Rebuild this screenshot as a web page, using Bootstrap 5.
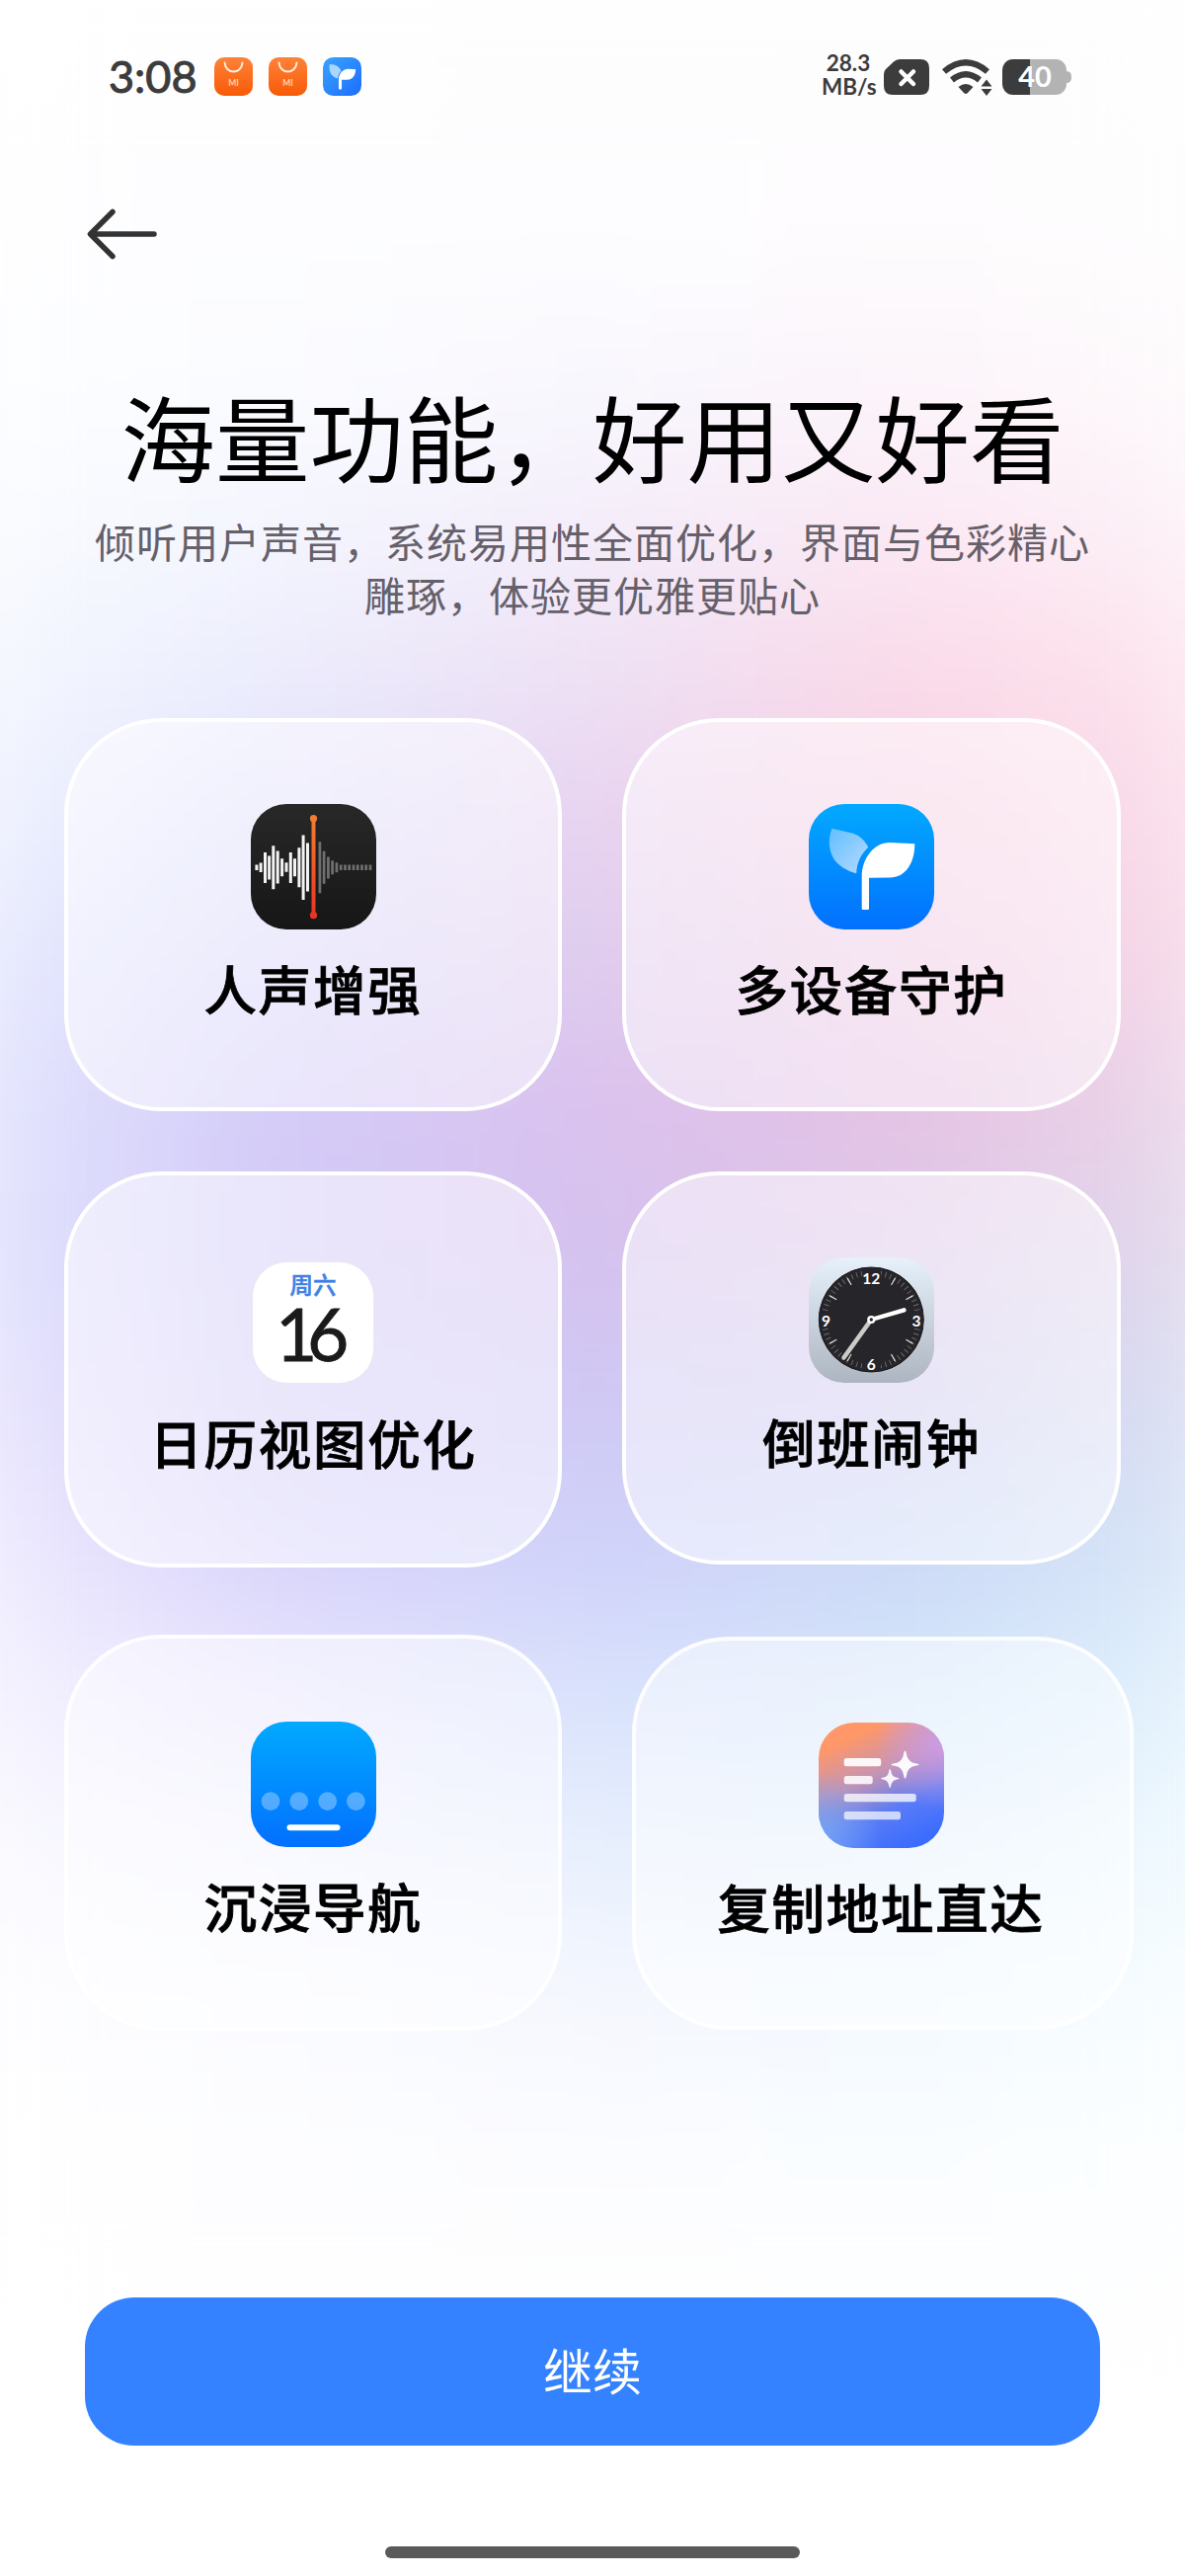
<!DOCTYPE html>
<html lang="zh-CN">

<head>
    <meta charset="UTF-8">
    <meta name="viewport" content="width=device-width, initial-scale=1.0">
    <title>海量功能，好用又好看</title>
    <link href="https://cdn.jsdelivr.net/npm/bootstrap@5.3.0/dist/css/bootstrap.min.css" rel="stylesheet">
    <style>
        body {
            font-family: "Noto Sans CJK SC", sans-serif;
            color: #000;
            background: #fff;
        }
        .screen {
            width: 1200px;
            height: 2608px;
            isolation: isolate;
        }
        /* soft colour wash behind everything */
        .wash {
            inset: 0 -60px;
            z-index: -1;
            filter: blur(62px);
        }
        .wash div { height: 150px; }
        .status-bar {
            height: 155px;
            padding: 0 115px 0 110px;
            color: #3c3c3c;
            font-family: Lato, "Noto Sans CJK SC", sans-serif;
        }
        .clock-text {
            font-size: 45px;
            line-height: 1;
            font-weight: 400;
            -webkit-text-stroke: 1px #3c3c3c;
            width: 107px;
        }
        .net-speed {
            font: 700 22.5px/24px Lato, sans-serif;
            width: 54px;
            margin: 0 9px 3px 0;
        }
        .back-row { height: 164px; padding: 54px 0 0 86px; }
        .headline {
            font-size: 95.5px;
            line-height: 130px;
            font-weight: 400;
            padding-top: 57px;
        }
        .subline {
            font-size: 41px;
            letter-spacing: 1px;
            line-height: 54px;
            color: #66606a;
            margin: 14px 0 0;
        }
        .features { padding: 99px 0 0 65px; gap: 61px; }
        .col-left { width: 504px; }
        .col-right { width: 505px; }
        .feature {
            height: 398px;
            border: 4px solid #fff;
            border-radius: 98px;
            background: rgba(255, 255, 255, .5);
            padding-top: 83px;
            margin-bottom: 61px;
        }
        .feature-name {
            font-size: 53.5px;
            letter-spacing: 1.7px;
            -webkit-text-stroke: .8px #000;
            line-height: 80px;
            font-weight: 500;
            margin-top: 19px;
            white-space: nowrap;
        }
        .feature-tall { height: 401px; }
        .feature-calendar { padding-top: 87px; margin-bottom: 68px; }
        .feature-clock { margin-bottom: 73px; }
        .feature-nav { padding-top: 84px; }
        .feature-copy { width: 508px; margin-left: 10px; }
        .features .last-card {
            border-color: rgba(255, 255, 255, .85);
        }
        .btn-continue {
            width: 1028px;
            height: 150px;
            border-radius: 50px;
            background: #3482ff;
            color: #fff;
            font-size: 50px;
            padding: 0 0 6px;
            margin: 209px 86px 0;
        }
        .home-bar {
            width: 420px;
            height: 12px;
            background: #5a5a5a;
            margin-top: 102px;
        }
        svg { display: block; flex: none; }
    </style>
</head>

<body>
    <div class="screen position-relative overflow-hidden">
        <div class="wash position-absolute" id="wash"></div>

        <div class="status-bar d-flex align-items-center justify-content-between">
            <div class="d-flex align-items-center">
                <div class="clock-text">3:08</div>
                <svg class="me-3" width="39" height="39" viewBox="0 0 39 39">
                    <defs>
                        <linearGradient id="orange" x2="0" y2="1">
                            <stop stop-color="#ff8238" />
                            <stop offset="1" stop-color="#f85a06" />
                        </linearGradient>
                    </defs>
                    <rect width="39" height="39" rx="10" fill="url(#orange)" />
                    <path d="M10.500 5.500c1 12 17 12 18 0" fill="none" stroke="#ffeedd" stroke-width="2" stroke-linecap="round" />
                    <text x="19.500" y="29" font-size="8.500" font-weight="700" fill="#ffd0a8" text-anchor="middle">MI</text>
                </svg>
                <svg class="me-3" width="39" height="39" viewBox="0 0 39 39">
                    <rect width="39" height="39" rx="10" fill="url(#orange)" />
                    <path d="M10.500 5.500c1 12 17 12 18 0" fill="none" stroke="#ffeedd" stroke-width="2" stroke-linecap="round" />
                    <text x="19.500" y="29" font-size="8.500" font-weight="700" fill="#ffd0a8" text-anchor="middle">MI</text>
                </svg>
                <svg width="39" height="39" viewBox="0 0 127 127">
                    <defs>
                        <linearGradient id="skySmall" x2="1" y2="1">
                            <stop stop-color="#38a5fb" />
                            <stop offset="1" stop-color="#1d6cff" />
                        </linearGradient>
                    </defs>
                    <rect width="127" height="127" rx="34" fill="url(#skySmall)" />
                    <path d="M22 24C40 22 54 30 60 45 53 53 50 60 49 70 28 66 18 46 22 24Z" fill="#a8d6ff" />
                    <path d="M52 103V72C54 50 67 39 84 38L108 40C107 60 98 74 80 74H62V103Q57 110 52 103Z" fill="#fff" />
                </svg>
            </div>
            <div class="d-flex align-items-center">
                <div class="net-speed text-center">28.3<br>MB/s</div>
                <svg width="46" height="36" viewBox="0 0 46 36">
                    <path d="M16 0H37Q46 0 46 9V27Q46 36 37 36H9Q0 36 0 27V15Q0 12 2 10L10 2.500Q12.500 0 16 0Z" fill="#3c3c3c" />
                    <path d="M17.500 12.500L30 25M30 12.500L17.500 25" stroke="#fff" stroke-width="4.500" stroke-linecap="round" />
                </svg>
                <svg class="ms-2 me-1" width="62" height="38" viewBox="0 0 62 38">
                    <g fill="none" stroke="#3c3c3c" stroke-width="6.200">
                        <path d="M7 13.500Q29 -5 51 13.500" />
                        <path d="M15 22Q29 10.500 43 22" />
                    </g>
                    <path d="M21.500 29Q29 23 36.500 29L31 35Q29 37 27 35Z" fill="#3c3c3c" />
                    <path d="M50 21.500L55.500 28.500H44.500ZM50 38L44.500 31H55.500Z" fill="#3c3c3c" />
                </svg>
                <svg width="70" height="36" viewBox="0 0 70 36">
                    <defs>
                        <clipPath id="cell"><rect width="65" height="36" rx="11" /></clipPath>
                    </defs>
                    <g clip-path="url(#cell)">
                        <rect width="66" height="36" fill="#b3b3b3" />
                        <rect width="28" height="36" fill="#3c3c3c" />
                    </g>
                    <path d="M65 12Q70 12 70 18T65 24Z" fill="#b3b3b3" />
                    <text x="33" y="28" font-size="29" font-weight="700" fill="#fff" text-anchor="middle">40</text>
                </svg>
            </div>
        </div>

        <div class="back-row">
            <svg width="76" height="56" viewBox="0 0 76 56">
                <path d="M70 28H7M28 5.500L5.500 28 28 50.500" fill="none" stroke="#333" stroke-width="5.500" stroke-linecap="round" stroke-linejoin="round" />
            </svg>
        </div>

        <h1 class="headline text-center mb-0">海量功能，好用又好看</h1>
        <p class="subline text-center">倾听用户声音，系统易用性全面优化，界面与色彩精心<br>雕琢，体验更优雅更贴心</p>

        <div class="features d-flex">
            <div class="col-left">
                <div class="feature d-flex flex-column align-items-center">
                    <svg width="127" height="127" viewBox="0 0 127 127">
                        <defs>
                            <linearGradient id="coal" x2="0" y2="1">
                                <stop stop-color="#282828" />
                                <stop offset="1" stop-color="#161616" />
                            </linearGradient>
                            <linearGradient id="needle" gradientUnits="userSpaceOnUse" x1="0" y1="14" x2="0" y2="113">
                                <stop stop-color="#f57c2e" />
                                <stop offset="1" stop-color="#ea3423" />
                            </linearGradient>
                        </defs>
                        <rect width="127" height="127" rx="36" fill="url(#coal)" />
                        <path d="M5.900 61.500v5.500M10.100 59.500v9.500M14.500 49v31M18.600 52.500v24M22.800 42.300v44M27.200 47.600v33M31.600 55.200v18M36 59.300v9.500M40.300 49v31M44.500 55.200v18M48.900 44.300v40M53.100 31.500v65.500M57.500 39.500v49" stroke="#f3f3f3" stroke-width="3" />
                        <path d="M69.900 38.300v52M74.100 47.800v33M78.400 53.400v22M82.600 57.200v14M86.900 59.200v10M91.200 61.500v5.500M95.500 61.500v5.500M99.700 61.500v5.500M104 61.500v5.500M108.200 61.500v5.500M112.500 61.500v5.500M116.700 61.500v5.500M121 61.500v5.500" stroke="#707070" stroke-width="2.700" />
                        <path d="M61.500 14.700h4V113h-4z" fill="url(#needle)" />
                        <circle cx="63.500" cy="14.700" r="3.600" fill="#f57c2e" />
                        <circle cx="63.500" cy="112.700" r="3.600" fill="#ea3423" />
                    </svg>
                    <div class="feature-name">人声增强</div>
                </div>
                <div class="feature feature-tall feature-calendar d-flex flex-column align-items-center">
                    <svg width="124" height="124" viewBox="0 0 124 124">
                        <rect x=".5" y=".5" width="123" height="123" rx="35" fill="#fff" stroke="#e9e7f2" />
                        <text x="62" y="32.500" font-size="23.500" font-weight="500" fill="#4080e4" stroke="#4080e4" stroke-width=".5" text-anchor="middle">周六</text>
                        <text x="24" y="101" font-family="Lato" font-size="73" fill="#1a1a1a" stroke="#1a1a1a" stroke-width=".8">1</text>
                        <text x="56" y="101" font-family="Lato" font-size="73" fill="#1a1a1a" stroke="#1a1a1a" stroke-width=".8">6</text>
                    </svg>
                    <div class="feature-name">日历视图优化</div>
                </div>
                <div class="feature feature-tall feature-nav last-card d-flex flex-column align-items-center">
                    <svg width="127" height="127" viewBox="0 0 127 127">
                        <defs>
                            <linearGradient id="sky" x2="0" y2="1">
                                <stop stop-color="#02a9ff" />
                                <stop offset="1" stop-color="#0270ff" />
                            </linearGradient>
                        </defs>
                        <rect width="127" height="127" rx="36" fill="url(#sky)" />
                        <g fill="#fff" fill-opacity=".32">
                            <circle cx="20" cy="80.700" r="9.400" />
                            <circle cx="48.800" cy="80.700" r="9.400" />
                            <circle cx="77.700" cy="80.700" r="9.400" />
                            <circle cx="106.400" cy="80.700" r="9.400" />
                        </g>
                        <rect x="36.500" y="104.300" width="54" height="6" rx="3" fill="#fff" />
                    </svg>
                    <div class="feature-name">沉浸导航</div>
                </div>
            </div>

            <div class="col-right">
                <div class="feature d-flex flex-column align-items-center">
                    <svg width="127" height="127" viewBox="0 0 127 127">
                        <defs>
                            <linearGradient id="leaf" x2="1" y2="1">
                                <stop stop-color="#62bfff" />
                                <stop offset="1" stop-color="#b5daff" />
                            </linearGradient>
                        </defs>
                        <rect width="127" height="127" rx="36" fill="url(#sky)" />
                        <path d="M23.400 24.700L44 29.500C51 31.500 57 37 60.300 43.700 52 52 49 59 48.200 70.300 39 68 29 62 25 55 20 46 19.500 35 23.400 24.700Z" fill="url(#leaf)" />
                        <path d="M53.700 106V73C54 55 66 39 82 39L107.300 40.300C107.300 60 98 74.500 82 74.500L61 74.800V106Q61 107 60 107H54.700Q53.700 107 53.700 106Z" fill="#fff" />
                    </svg>
                    <div class="feature-name">多设备守护</div>
                </div>
                <div class="feature feature-clock d-flex flex-column align-items-center">
                    <svg width="127" height="127" viewBox="0 0 127 127" font-family="Lato" font-weight="700">
                        <defs>
                            <linearGradient id="steel" x2="0" y2="1">
                                <stop stop-color="#e6f1fb" />
                                <stop offset="1" stop-color="#adb5c0" />
                            </linearGradient>
                        </defs>
                        <rect width="127" height="127" rx="36" fill="url(#steel)" />
                        <circle cx="63.300" cy="63" r="53" fill="#26262a" stroke="#17171a" />
                        <circle cx="63.300" cy="63" r="47.500" fill="none" stroke="#77777a" stroke-width="5.500" pathLength="600" stroke-dasharray="1.600 8.400" stroke-dashoffset=".8" />
                        <circle cx="63.300" cy="63" r="44.500" fill="none" stroke="#d8d8d4" stroke-width="8" pathLength="120" stroke-dasharray=".550 9.450" stroke-dashoffset=".27" />
                        <path d="M54 10.500h19v15H54zM54 101h19v14H54zM10.500 55h14v16h-14zM102 55h14v16h-14z" fill="#26262a" />
                        <g fill="#fff" font-size="15.500" text-anchor="middle">
                            <text x="63.300" y="26.500">12</text>
                            <text x="109" y="69.500">3</text>
                            <text x="63.300" y="114">6</text>
                            <text x="17.500" y="69.500">9</text>
                        </g>
                        <path d="M63.300 63L35.500 101.500" stroke="#cbcbc7" stroke-width="4.600" stroke-linecap="round" />
                        <path d="M63.300 63L96.500 53.300" stroke="#fff" stroke-width="4.400" stroke-linecap="round" />
                        <circle cx="63.300" cy="63" r="2.900" fill="#26262a" stroke="#fff" stroke-width="2.400" />
                    </svg>
                    <div class="feature-name">倒班闹钟</div>
                </div>
                <div class="feature feature-copy last-card d-flex flex-column align-items-center">
                    <svg class="me-1" width="127" height="127" viewBox="0 0 127 127">
                        <defs>
                            <linearGradient id="dusk" x1=".25" y1="0" x2=".7" y2="1">
                                <stop offset=".1" stop-color="#ff9768" />
                                <stop offset=".42" stop-color="#c594b4" />
                                <stop offset=".7" stop-color="#5a7cf6" />
                                <stop offset="1" stop-color="#3a6cff" />
                            </linearGradient>
                            <radialGradient id="lilac" cx="1" cy=".15" r=".55">
                                <stop stop-color="#cb9ce4" />
                                <stop offset="1" stop-color="#cb9ce4" stop-opacity="0" />
                            </radialGradient>
                            <radialGradient id="mist" cx="0" cy=".9" r=".5">
                                <stop stop-color="#74a4f4" />
                                <stop offset="1" stop-color="#74a4f4" stop-opacity="0" />
                            </radialGradient>
                        </defs>
                        <rect width="127" height="127" rx="36" fill="url(#dusk)" />
                        <rect width="127" height="127" rx="36" fill="url(#lilac)" />
                        <rect width="127" height="127" rx="36" fill="url(#mist)" />
                        <g fill="#fff">
                            <rect x="25.700" y="36" width="37.500" height="8.300" rx="2.500" fill-opacity=".93" />
                            <rect x="25.700" y="54" width="29" height="8.300" rx="2.500" fill-opacity=".86" />
                            <rect x="25.700" y="72" width="73" height="8.300" rx="2.500" fill-opacity=".76" />
                            <rect x="25.700" y="90" width="57.300" height="8.300" rx="2.500" fill-opacity=".7" />
                            <path d="M87.500 28.500Q88.500 28.500 88.800 31 90 40 98 41.200 101.500 41.600 101.500 42.500T98 43.800Q90 45 88.800 54 88.500 56.500 87.500 56.500T86.200 54Q85 45 77 43.800 73.500 43.400 73.500 42.500T77 41.200Q85 40 86.200 31 86.500 28.500 87.500 28.500Z" fill-opacity=".95" />
                            <path d="M72.200 47Q73 47 73.200 49 74 55 79.500 55.700 81.500 56 81.500 56.500T79.500 57.400Q74 58 73.200 64 73 66 72.200 66T71.200 64Q70.400 58 65 57.400 63 57 63 56.500T65 55.700Q70.400 55 71.200 49 71.400 47 72.200 47Z" fill-opacity=".9" />
                        </g>
                    </svg>
                    <div class="feature-name me-1">复制地址直达</div>
                </div>
            </div>
        </div>

        <button type="button" class="btn btn-continue border-0">继续</button>
        <div class="home-bar rounded-pill mx-auto"></div>
    </div>

    <script src="https://cdn.jsdelivr.net/npm/bootstrap@5.3.0/dist/js/bootstrap.bundle.min.js"></script>
    <script>
        // each row: colours from left to right, top of the screen first
        const washRows = [
            ["#ffffff", "#fefefe", "#fdfdfe", "#fefdfe", "#fefefe"],
            ["#fefeff", "#fdfdff", "#fdfdff", "#fefcfe", "#fefefe"],
            ["#fdfeff", "#fbfcff", "#f9f8fe", "#fcf5fa", "#fefcfd"],
            ["#fafcff", "#f4f6fe", "#f4eefa", "#fbe9f4", "#fdf4f9"],
            ["#f6f9ff", "#ecedfd", "#eee1f5", "#fbdae8", "#fde8f1"],
            ["#f1f5ff", "#dfe0fb", "#e8d3f0", "#f6d0e2", "#fbe0ec"],
            ["#e9edff", "#d8d6fa", "#deccee", "#efc9e2", "#f7dceb"],
            ["#e5e8ff", "#d3cbf8", "#dac0ee", "#e5c2e3", "#ecdbeb"],
            ["#e4e7ff", "#d2cbf7", "#d5c1ee", "#dcc9e8", "#e3dced"],
            ["#ebe9ff", "#d4cdf7", "#cfc8f4", "#cfcdef", "#dce2f3"],
            ["#f2efff", "#d9d4fb", "#d0d2fa", "#cbdaf7", "#dbe9f8"],
            ["#f7f4ff", "#e9e6fd", "#d9e2fc", "#d5e7fb", "#e6f4fd"],
            ["#fbfbff", "#f3f4fe", "#e8effd", "#e6f2fd", "#f2fbff"],
            ["#fefeff", "#fafbff", "#f5f7fe", "#f2f9ff", "#f9feff"],
            ["#ffffff", "#fdfdff", "#fbfcff", "#fafdff", "#fdffff"],
            ["#ffffff", "#fefeff", "#fefefe", "#fdfeff", "#fefeff"]
        ];
        const wash = document.getElementById("wash");
        washRows.forEach(row => {
            wash.innerHTML += `<div style="background: linear-gradient(to right, ${row.join(", ")})"></div>`;
        });
    </script>
</body>

</html>
